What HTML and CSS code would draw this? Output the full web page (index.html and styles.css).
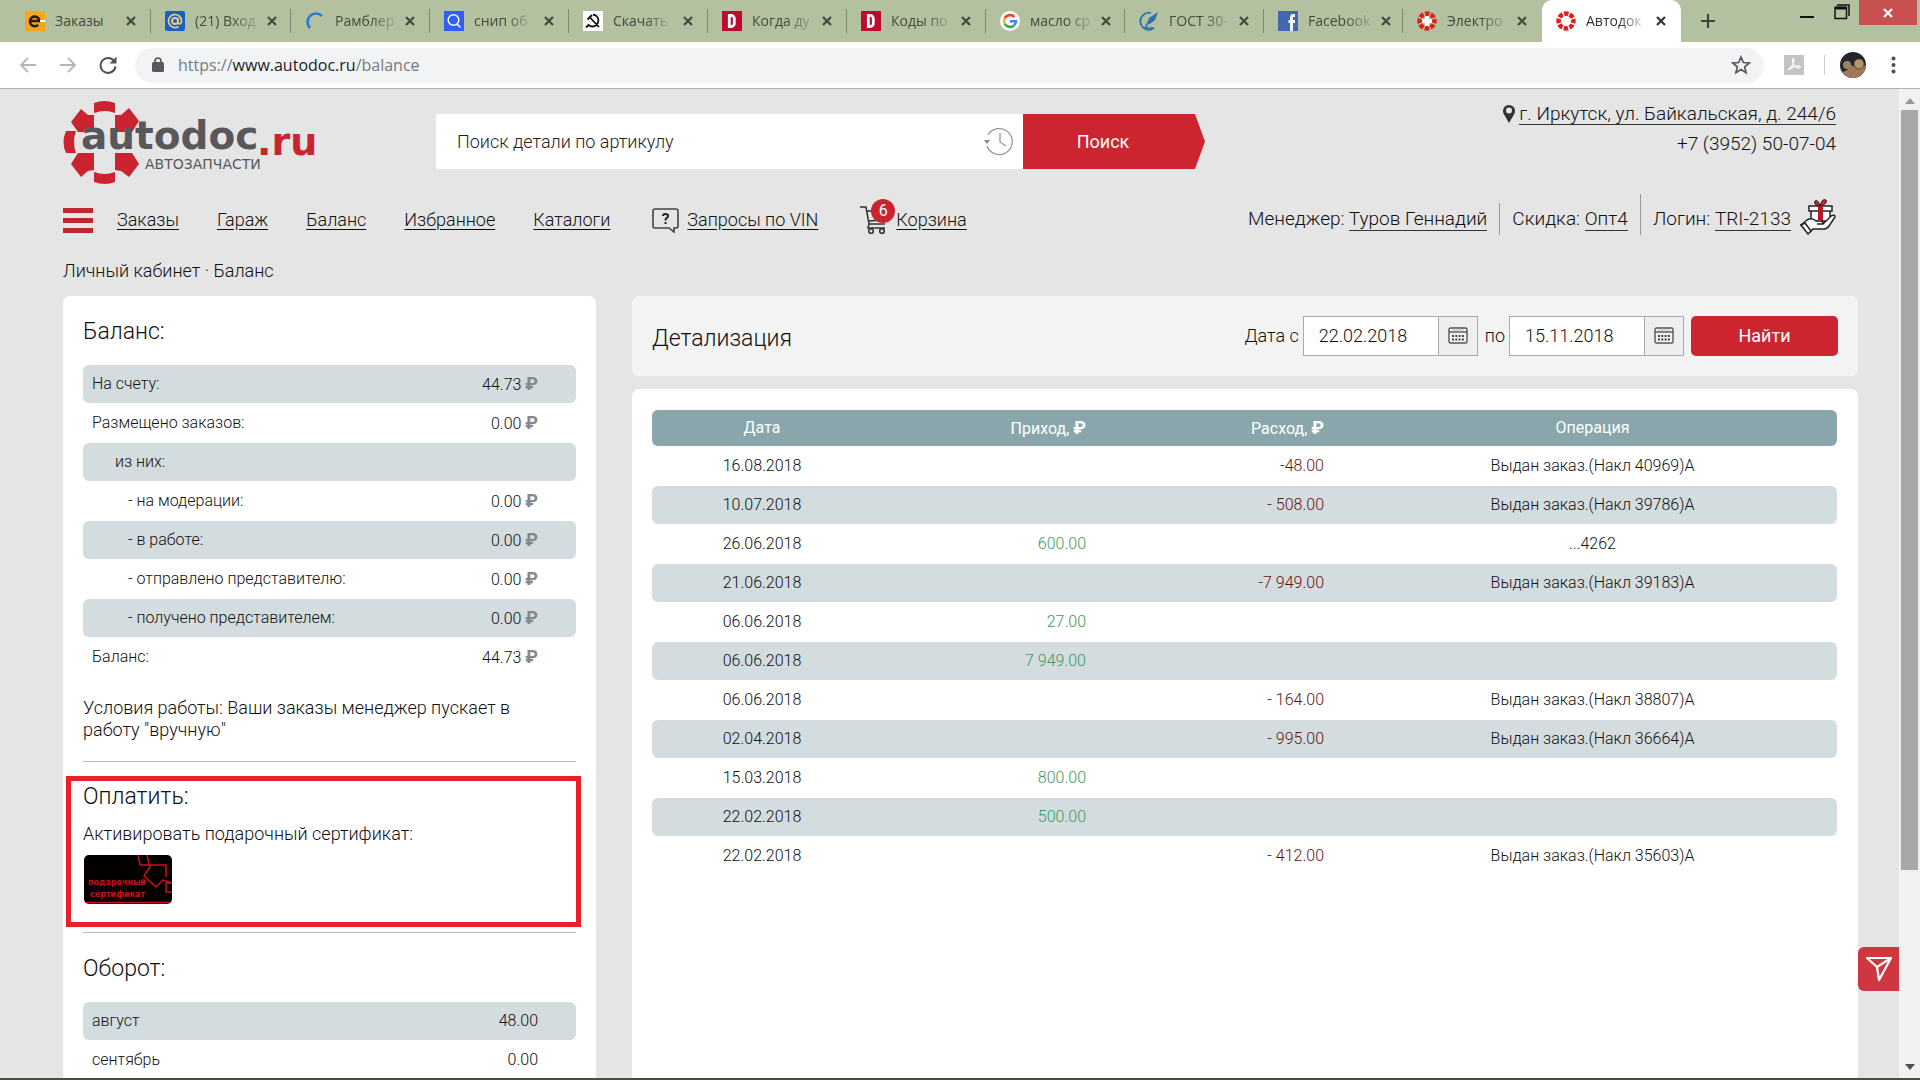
FILE: index.html
```html
<!DOCTYPE html>
<html lang="ru">
<head>
<meta charset="utf-8">
<title>Автодок</title>
<link rel="stylesheet" href="styles.css">
</head>
<body>
<svg class="defs" aria-hidden="true">
  <symbol id="x" viewBox="0 0 12 12"><path d="M2 2l8 8M10 2l-8 8" stroke="currentColor" stroke-width="2.2" fill="none"/></symbol>
  <symbol id="gear" viewBox="0 0 20 20"><circle cx="10" cy="10" r="7.4" fill="none" stroke="#e0211b" stroke-width="4.6" stroke-dasharray="4.4 1.41" stroke-dashoffset="2.2"/><path d="M10 5v10M5 10h10" stroke="#fff" stroke-width="4"/></symbol>
  <symbol id="dnews" viewBox="0 0 20 20"><rect width="20" height="20" fill="#bf0a30"/><path d="M7.300 4.500v11h2a3 3 0 0 0 3-3v-5a3 3 0 0 0-3-3z" fill="none" stroke="#fff" stroke-width="2.800"/></symbol>
  <symbol id="cal" viewBox="0 0 20 18"><rect x="1" y="1" width="18" height="15" rx="1.500" fill="#f4f5f6" stroke="#555" stroke-width="1.400"/><path d="M1 5h18" stroke="#555" stroke-width="1.400"/><path d="M4 3h12" stroke="#bbb"/><path d="M4 9h12M4 12.500h12" stroke="#444" stroke-width="2" stroke-dasharray="2 1.300"/></symbol>
</svg>

<header class="tabs">
  <div class="tab"><svg class="fav" viewBox="0 0 20 20"><rect width="20" height="20" fill="#f9a51a"/><path d="M5 10h9.500a4.800 4.800 0 1 0-1.400 3.800" fill="none" stroke="#2b1c08" stroke-width="2.600"/><path d="M15 10h5" stroke="#fff" stroke-width="2"/></svg><span>Заказы</span><button aria-label="Закрыть"><svg><use href="#x"/></svg></button></div>
  <div class="tab"><svg class="fav" viewBox="0 0 20 20"><rect width="20" height="20" rx="2" fill="#1760c9"/><circle cx="10" cy="10" r="3" fill="none" stroke="#f5c978" stroke-width="1.800"/><path d="M13 7v4.500c0 2 3.500 2 3.500-1.500a6.500 6.500 0 1 0-3 5.500" fill="none" stroke="#f5c978" stroke-width="1.700"/></svg><span>(21) Вход</span><button aria-label="Закрыть"><svg><use href="#x"/></svg></button></div>
  <div class="tab"><svg class="fav" viewBox="0 0 20 20"><path d="M5 17A8 8 0 0 1 17 5" fill="none" stroke="#2d79d6" stroke-width="2.600"/></svg><span>Рамблер</span><button aria-label="Закрыть"><svg><use href="#x"/></svg></button></div>
  <div class="tab"><svg class="fav" viewBox="0 0 20 20"><rect width="20" height="20" fill="#315efb"/><circle cx="9.500" cy="9" r="5.300" fill="none" stroke="#fff" stroke-width="1.500"/><path d="M13 13l3.500 3.500" stroke="#fff" stroke-width="1.500"/></svg><span>снип об</span><button aria-label="Закрыть"><svg><use href="#x"/></svg></button></div>
  <div class="tab"><svg class="fav" viewBox="0 0 20 20"><rect width="20" height="20" fill="#fff"/><path d="M10 3.500a6 6 0 1 1-4.500 10.500L3 16.500M4.500 8.500L9 4M7 6.500l9 9.500" fill="none" stroke="#111" stroke-width="1.800"/></svg><span>Скачать</span><button aria-label="Закрыть"><svg><use href="#x"/></svg></button></div>
  <div class="tab"><svg class="fav"><use href="#dnews"/></svg><span>Когда ду</span><button aria-label="Закрыть"><svg><use href="#x"/></svg></button></div>
  <div class="tab"><svg class="fav"><use href="#dnews"/></svg><span>Коды по</span><button aria-label="Закрыть"><svg><use href="#x"/></svg></button></div>
  <div class="tab"><svg class="fav" viewBox="0 0 20 20"><circle cx="10" cy="10" r="10" fill="#fff"/><g fill="none" stroke-width="2.600"><path d="M14.500 6A6 6 0 0 0 4.800 7.200" stroke="#ea4335"/><path d="M4.800 7.200a6 6 0 0 0 0 5.600" stroke="#fbbc05"/><path d="M4.800 12.800A6 6 0 0 0 14 14.400" stroke="#34a853"/><path d="M14 14.400a6 6 0 0 0 2-4.200h-6" stroke="#4285f4"/></g></svg><span>масло ср</span><button aria-label="Закрыть"><svg><use href="#x"/></svg></button></div>
  <div class="tab"><svg class="fav" viewBox="0 0 20 20"><path d="M12 2A8.500 8.500 0 1 0 15 17" fill="none" stroke="#2c6fb3" stroke-width="1.800"/><path d="M19 1l-3 8-5 4-3-1 2-5z" fill="#2c6fb3"/><path d="M9 12l-3 5h8" fill="none" stroke="#2c6fb3" stroke-width="1.500"/></svg><span>ГОСТ 30-</span><button aria-label="Закрыть"><svg><use href="#x"/></svg></button></div>
  <div class="tab"><svg class="fav" viewBox="0 0 20 20"><rect width="20" height="20" fill="#4267b2"/><path d="M17 4.500h-1.500q-2 0-2 2V20M10.500 10.500H17" fill="none" stroke="#fff" stroke-width="2.800"/></svg><span>Facebook</span><button aria-label="Закрыть"><svg><use href="#x"/></svg></button></div>
  <div class="tab"><svg class="fav"><use href="#gear"/></svg><span>Электро</span><button aria-label="Закрыть"><svg><use href="#x"/></svg></button></div>
  <div class="tab active"><svg class="fav"><use href="#gear"/></svg><span>Автодок</span><button aria-label="Закрыть"><svg><use href="#x"/></svg></button></div>
  <button class="newtab" aria-label="Новая вкладка"><svg viewBox="0 0 16 16"><path d="M8 1v14M1 8h14" stroke="#3c463a" stroke-width="2.200"/></svg></button>
  <div class="wincontrols">
    <button aria-label="Свернуть"><svg width="16" height="20"><path d="M1 17h14" stroke="#111" stroke-width="2"/></svg></button>
    <button aria-label="Восстановить"><svg width="16" height="20"><path d="M1 7.500h11.500V18.500H1zM3 5h12v11" fill="none" stroke="#111" stroke-width="1.500"/><path d="M1 8h11.500" stroke="#111" stroke-width="3"/></svg></button>
    <button class="winclose" aria-label="Закрыть окно"><svg width="12" height="12"><use href="#x"/></svg></button>
  </div>
</header>

<div class="toolbar">
  <button aria-label="Назад"><svg viewBox="0 0 18 18"><path d="M17 9H2M9 2L2 9l7 7" fill="none" stroke="#b4b6b8" stroke-width="1.800"/></svg></button>
  <button aria-label="Вперёд"><svg viewBox="0 0 18 18"><path d="M1 9h15M9 2l7 7-7 7" fill="none" stroke="#b4b6b8" stroke-width="1.800"/></svg></button>
  <button aria-label="Обновить"><svg viewBox="0 0 18 18"><path d="M15.500 5.500a7.500 7.500 0 1 0 1 5" fill="none" stroke="#4d5156" stroke-width="2"/><path d="M17.500 0.500v7h-7z" fill="#4d5156"/></svg></button>
  <div class="omnibox">
    <svg width="12" height="16" viewBox="0 0 12 16"><rect y="5" width="12" height="10" rx="1.500" fill="#55585d"/><path d="M3 6V4a3 3 0 0 1 6 0v2" fill="none" stroke="#55585d" stroke-width="1.600"/></svg>
    <div class="url">https://<b>www.autodoc.ru</b>/balance</div>
    <svg class="star" width="20" height="20" viewBox="0 0 20 20"><path d="M10 2l2.300 5.500 6 .500-4.600 3.900 1.400 5.800L10 14.600l-5.100 3.100 1.400-5.800L1.700 8l6-.500z" fill="none" stroke="#55585d" stroke-width="1.700"/></svg>
  </div>
  <svg width="20" height="20" viewBox="0 0 20 20"><rect width="20" height="20" fill="#c4c4c4"/><path d="M4 15c4-2 7-9 5.500-11S8 9 11 11.500s6 1.500 5 0-8 0-12 3.500z" fill="none" stroke="#fff" stroke-width="1.200"/></svg>
  <i class="sep"></i>
  <svg class="avatar" width="26" height="26" viewBox="0 0 26 26"><circle cx="13" cy="13" r="13" fill="#23252c"/><path d="M2 20q6-1 9-7 8 5 15 0a13 13 0 0 1-24 7z" fill="#a0785c"/><circle cx="7" cy="13" r="4" fill="#9a865e"/><circle cx="19" cy="12" r="5" fill="#b09868" stroke="#5d4a31"/></svg>
  <svg class="dots" width="5" height="18" viewBox="0 0 5 18"><g fill="#4d5156"><circle cx="2.500" cy="2.500" r="2"/><circle cx="2.500" cy="9" r="2"/><circle cx="2.500" cy="15.500" r="2"/></g></svg>
</div>

<div class="viewport">
<main class="page">
  <div class="top">
    <a class="logo" href="#" aria-label="autodoc.ru">
      <svg width="260" height="84" viewBox="0 0 260 84">
        <g fill="#cb2431">
          <path d="M31 2q11-4 21 0v10q-10-4-21 0z"/><path d="M31 81q11 4 21 0V71q-10 4-21 0z"/>
          <path d="M3 30h10q-4 11 0 22H3q-5-11 0-22z"/>
          <path d="M31 14v17H15q-1-2-2-3l-5-7 10-13 7 6z"/><path d="M52 14v17h17q1-2 2-3l5-8L66 7l-8 7z"/>
          <path d="M31 69V52H15l-2 3-5 8 10 13 7-6z"/><path d="M52 69V52h17l2 3 5 8-10 13-8-6z"/>
        </g>
        <text class="logo-main" x="18" y="48">autodoc</text><text class="logo-ru" x="194" y="54">.ru</text>
        <text class="logo-sub" x="82" y="68">АВТОЗАПЧАСТИ</text>
      </svg>
    </a>
    <form class="search">
      <div class="field"><input type="text" aria-label="Поиск" placeholder="Поиск детали по артикулу">
        <svg width="30" height="30" viewBox="0 0 30 30"><path d="M4 8a13 13 0 1 1-1 11M16 6v9l6 4" fill="none" stroke="#999" stroke-width="1.300"/><path d="M0 13h6l-3 4z" fill="#888"/></svg></div>
      <button type="button">Поиск</button>
    </form>
    <address>
      <div><svg width="14" height="20" viewBox="0 0 14 20"><path d="M7 19L1.500 9.500a6 6 0 1 1 11 0z" fill="#333"/><circle cx="7" cy="6.500" r="3" fill="#e5e5e5"/></svg><a href="#">г. Иркутск, ул. Байкальская, д. 244/6</a></div>
      <div>+7 (3952) 50-07-04</div>
    </address>
  </div>

  <div class="navrow">
    <nav>
      <button class="burger" aria-label="Меню"><i></i><i></i><i></i></button>
      <a href="#">Заказы</a><a href="#">Гараж</a><a href="#">Баланс</a><a href="#">Избранное</a><a href="#">Каталоги</a>
      <span class="iconlink"><svg width="27" height="26" viewBox="0 0 27 26"><path d="M3 2h21q2 0 2 2v15q0 2-2 2h-2v4l-5-4H3q-2 0-2-2V4q0-2 2-2z" fill="none" stroke="#444" stroke-width="1.600"/><path d="M11 9q0-2 2.500-2T16 9q0 1.500-1.300 2T13.500 13.500M13.500 15v2" fill="none" stroke="#222" stroke-width="2"/></svg><a href="#">Запросы по VIN</a></span>
      <span class="iconlink cart"><svg width="26" height="30" viewBox="0 0 26 30"><path d="M0 2h6l3 17h16M7 6h18l-2 9-15 1M9 19l-1 4h17" fill="none" stroke="#333" stroke-width="1.500"/><circle cx="11" cy="26" r="2.300" fill="none" stroke="#333" stroke-width="1.600"/><circle cx="22" cy="26" r="2.300" fill="none" stroke="#333" stroke-width="1.600"/></svg><b class="badge">6</b><a href="#">Корзина</a></span>
    </nav>
    <div class="user">
      <span>Менеджер: <a href="#">Туров Геннадий</a></span>
      <span>Скидка: <a href="#">Опт4</a></span>
      <span class="tall">Логин: <a href="#">TRI-2133</a></span>
      <svg width="36" height="36" viewBox="0 0 36 36"><g stroke="#222" stroke-width="1.500" fill="#fff"><path d="M11 12h19v10H11zM9 7h23v5H9z"/><path d="M1 26l6-5q5-3 9 1h5q3 1 1 3h-5 6l8-8q4-2 4 1l-6 9q-2 3-6 3H13l-3 3z"/><path d="M1 26l4-2 6 8-3 3z"/></g><path d="M18 7h5v15h-5z" fill="#b01c28"/><path d="M20 7q-7-1-5-5 3-2 5 5 2-8 6-6 2 4-6 6z" fill="#d02030" stroke="#222"/></svg>
    </div>
  </div>

  <div class="crumbs">Личный кабинет · Баланс</div>

  <div class="columns">
    <aside class="card side">
      <section>
        <h2>Баланс:</h2>
        <table class="rows money">
          <tr><td>На счету:</td><td>44.73 <b>₽</b></td></tr>
          <tr><td>Размещено заказов:</td><td>0.00 <b>₽</b></td></tr>
          <tr><td class="in1">из них:</td><td></td></tr>
          <tr><td class="in2">- на модерации:</td><td>0.00 <b>₽</b></td></tr>
          <tr><td class="in2">- в работе:</td><td>0.00 <b>₽</b></td></tr>
          <tr><td class="in2">- отправлено представителю:</td><td>0.00 <b>₽</b></td></tr>
          <tr><td class="in2">- получено представителем:</td><td>0.00 <b>₽</b></td></tr>
          <tr><td>Баланс:</td><td>44.73 <b>₽</b></td></tr>
        </table>
        <p class="terms">Условия работы: Ваши заказы менеджер пускает в работу "вручную"</p>
      </section>
      <section class="pay">
        <h2>Оплатить:</h2>
        <p>Активировать подарочный сертификат:</p>
        <a href="#" class="cert"><svg width="88" height="49" viewBox="0 0 88 49"><rect width="88" height="49" rx="5" fill="#050000"/><path d="M54 0l2 10h26v12M63 0l3 12-6 9 12 11 7-7 9 3M88 28h-6v9h6M2 47.500h84" fill="none" stroke="#c8101c" stroke-width="1.500"/><text x="4" y="30">подарочный</text><text x="6" y="42">сертификат</text></svg></a>
        <div class="marker"></div>
      </section>
      <section class="turnover">
        <h2>Оборот:</h2>
        <table class="rows money">
          <tr><td>август</td><td>48.00</td></tr>
          <tr><td>сентябрь</td><td>0.00</td></tr>
        </table>
      </section>
    </aside>

    <div class="detail">
      <form class="card filter">
        <h2>Детализация</h2>
        <label for="from">Дата с</label>
        <div class="date"><input id="from" type="text" value="22.02.2018"><button type="button" aria-label="Календарь"><svg width="22" height="18"><use href="#cal"/></svg></button></div>
        <label for="to" class="mid">по</label>
        <div class="date"><input id="to" type="text" value="15.11.2018"><button type="button" aria-label="Календарь"><svg width="22" height="18"><use href="#cal"/></svg></button></div>
        <button type="button" class="find">Найти</button>
      </form>
      <div class="card list">
        <table class="rows ops">
          <thead><tr><th>Дата</th><th>Приход, <b>₽</b></th><th>Расход, <b>₽</b></th><th>Операция</th></tr></thead>
          <tbody>
          <tr><td>16.08.2018</td><td></td><td>-48.00</td><td>Выдан заказ.(Накл 40969)А</td></tr>
          <tr><td>10.07.2018</td><td></td><td>- 508.00</td><td>Выдан заказ.(Накл 39786)А</td></tr>
          <tr><td>26.06.2018</td><td>600.00</td><td></td><td>...4262</td></tr>
          <tr><td>21.06.2018</td><td></td><td>-7 949.00</td><td>Выдан заказ.(Накл 39183)А</td></tr>
          <tr><td>06.06.2018</td><td>27.00</td><td></td><td></td></tr>
          <tr><td>06.06.2018</td><td>7 949.00</td><td></td><td></td></tr>
          <tr><td>06.06.2018</td><td></td><td>- 164.00</td><td>Выдан заказ.(Накл 38807)А</td></tr>
          <tr><td>02.04.2018</td><td></td><td>- 995.00</td><td>Выдан заказ.(Накл 36664)А</td></tr>
          <tr><td>15.03.2018</td><td>800.00</td><td></td><td></td></tr>
          <tr><td>22.02.2018</td><td>500.00</td><td></td><td></td></tr>
          <tr><td>22.02.2018</td><td></td><td>- 412.00</td><td>Выдан заказ.(Накл 35603)А</td></tr>
          </tbody>
        </table>
      </div>
    </div>
  </div>
</main>
<button class="feedback" aria-label="Написать"><svg width="28" height="26" viewBox="0 0 28 26"><path d="M2 2h24L14 24l-2-13zM2 2l10 9L26 2" fill="none" stroke="#fff" stroke-width="2.200" stroke-linejoin="round"/></svg></button>
<div class="scrollbar"><svg width="10" height="6"><path d="M0 6l5-6 5 6z" fill="#999"/></svg><i></i><svg width="10" height="6"><path d="M0 0l5 6 5-6z" fill="#505050"/></svg></div>
</div>
<footer class="taskbar"></footer>
</body>
</html>
```
FILE: styles.css
```css
* { box-sizing: border-box; }
body { margin: 0; height: 100vh; display: flex; flex-direction: column; overflow: hidden; font: 300 18px/22px Roboto, sans-serif; color: #111; background: #e5e5e5; }
button { border: 0; background: none; padding: 0; margin: 0; font: inherit; color: inherit; }
input { font: inherit; color: inherit; border: 0; min-width: 0; }
svg { display: block; flex: none; }
i { display: block; }
a { color: inherit; }
h2 { margin: 0; font-size: 23px; line-height: 28px; font-weight: 300; }
p { margin: 0; }
.defs { position: absolute; width: 0; height: 0; }

.tabs { flex: none; height: 42px; padding-left: 11px; background: #b3c1a0; display: flex; font: 400 14px/20px "Open Sans", sans-serif; color: #434b40; }
.tab { width: 139px; display: flex; align-items: center; gap: 10px; padding: 0 14px; background: linear-gradient(#7f8a72, #7f8a72) right center / 1px 24px no-repeat; }
.tab:nth-child(-n+2) { width: 140px; }
.tab:nth-child(11) { background: none; }
.tab.active { background: #fff; border-radius: 10px 10px 0 0; color: #333; }
.fav { width: 20px; height: 20px; }
.tab span { white-space: nowrap; -webkit-mask-image: linear-gradient(90deg, #000 60%, rgba(0, 0, 0, .2)); mask-image: linear-gradient(90deg, #000 60%, rgba(0, 0, 0, .2)); }
.tab:first-child span { -webkit-mask-image: none; mask-image: none; }
.tab button { margin-left: auto; }
.tab button svg { width: 12px; height: 12px; }
.newtab { width: 54px; display: grid; place-items: center; }
.newtab svg { width: 16px; height: 16px; }
.wincontrols { margin-left: auto; display: flex; align-items: flex-start; gap: 19px; padding-right: 3px; }
.wincontrols .winclose { width: 58px; height: 25px; margin-left: -10px; background: #c75050; color: #fff; display: grid; place-items: center; }

.toolbar { flex: none; height: 47px; background: #fff; border-bottom: 1px solid #b0b0b0; display: flex; align-items: center; padding: 0 24px 0 19px; }
.toolbar button { margin-right: 22px; }
.toolbar button svg { width: 18px; height: 18px; }
.omnibox { flex: 1; height: 35px; border-radius: 18px; background: #f1f3f4; display: flex; align-items: center; padding: 0 13px 0 17px; margin: 0 20px 0 -4px; }
.url { flex: 1; margin-left: 14px; font: 400 16px/24px "Open Sans", sans-serif; color: #777b80; }
.url b { font-weight: 400; color: #202124; }
.sep { width: 1px; height: 20px; background: #ccc; margin: 0 15px 0 20px; }
.avatar { margin-right: 25px; }

.viewport { flex: 1; min-height: 0; display: flex; position: relative; overflow: hidden; }
.page { flex: 1; min-width: 0; padding: 12px 41px 0 63px; display: flex; flex-direction: column; }
.scrollbar { width: 21px; background: #f1f1f1; display: flex; flex-direction: column; align-items: center; padding: 9px 0 8px; }
.scrollbar i { width: 17px; height: 760px; margin: 6px 0 auto; background: #a8a8a8; }
.taskbar { flex: none; height: 2px; background: #46503f; }
.feedback { position: absolute; right: 21px; bottom: 87px; width: 41px; height: 44px; border-radius: 6px 0 0 6px; background: #ce3640; display: grid; place-items: center; }

.top { display: flex; height: 84px; padding-right: 22px; }
.logo { width: 373px; }
.logo svg { overflow: visible; }
.logo-main { font: bold 39px "DejaVu Sans", sans-serif; fill: #58585a; }
.logo-ru { font: bold 38px "DejaVu Sans", sans-serif; fill: #cb2431; }
.logo-sub { font: 14px "DejaVu Sans", sans-serif; fill: #58585a; }
.search { display: flex; height: 55px; margin-top: 13px; width: 769px; }
.field { flex: 1; display: flex; align-items: center; background: #fff; padding: 0 9px 0 21px; }
.field input { flex: 1; background: none; padding: 0; outline: 0; }
.field input::placeholder { color: #222; opacity: 1; }
.search button { width: 182px; padding-right: 22px; color: #fff; background: #cd2530; clip-path: polygon(0 0, 172px 0, 100% 50%, 172px 100%, 0 100%); font-weight: 400; }
address { margin: -2px 0 0 auto; font-style: normal; text-align: right; font-size: 19px; line-height: 30px; }
address div { display: flex; justify-content: flex-end; align-items: center; gap: 3px; min-height: 30px; }
address a, .user a { text-decoration: none; border-bottom: 1px solid #333; line-height: 20px; }

.navrow { display: flex; justify-content: space-between; align-items: flex-end; height: 43px; margin-top: 9px; padding-right: 22px; white-space: nowrap; }
nav { display: flex; align-items: center; gap: 38px; }
.burger { width: 30px; display: grid; gap: 5px; margin-right: -14px; }
.burger i { height: 5px; background: #c0272d; }
nav a { text-underline-offset: 3px; }
.iconlink { display: flex; align-items: center; gap: 8px; position: relative; margin-left: 4px; }
.cart { gap: 10px; }
.badge { position: absolute; left: 11px; top: -6px; width: 24px; height: 24px; border-radius: 50%; background: #cb2431; color: #fff; font-size: 16px; line-height: 24px; font-weight: 400; text-align: center; }
.user { display: flex; align-items: flex-end; font-size: 19px; }
.user span { line-height: 32px; padding: 0 12px; border-left: 1px solid #999; }
.user span:first-child { border: 0; }
.user .tall { padding-top: 9px; padding-right: 9px; }

.crumbs { margin-top: 24px; line-height: 24px; }
.columns { display: grid; grid-template-columns: 533px 1fr; gap: 36px; margin-top: 13px; }
.card { border-radius: 7px; background: #fff; }
.side { padding: 22px 20px 20px 20px; }
.rows { width: 100%; border-collapse: separate; border-spacing: 0 1px; font-size: 16px; line-height: 20px; }
.rows td { height: 38px; padding: 0; }
.rows td:first-child, .rows th:first-child { border-radius: 6px 0 0 6px; }
.rows td:last-child, .rows th:last-child { border-radius: 0 6px 6px 0; }
.money { margin-top: 18px; }
.money tr:nth-child(odd) td, .ops tbody tr:nth-child(even) td { background: #d3dcdf; }
.money td:first-child { padding-left: 9px; }
.money td:last-child { text-align: right; padding-right: 38px; }
.rows b { font-size: 18px; font-weight: 700; }
.money b { color: #888; }
.money td.in1 { padding-left: 32px; }
.money td.in2 { padding-left: 45px; }
.terms { margin-top: 20px; padding: 0 40px 20px 0; }
.pay { position: relative; border-top: 1px solid #bbb; padding: 21px 0 27px; height: 171px; }
.pay p { margin: 12px 0 10px; }
.cert { display: block; margin-left: 1px; width: 88px; }
.cert text { font: bold 8px "DejaVu Sans", sans-serif; fill: #c8101c; }
.marker { position: absolute; left: -17px; right: -5px; top: 14px; bottom: 5px; border: 5px solid #e92029; }
.turnover { border-top: 1px solid #bbb; padding-top: 22px; }

.detail { display: flex; flex-direction: column; gap: 13px; min-width: 0; }
.filter { background: #f3f3f3; height: 80px; padding: 0 20px; display: flex; align-items: center; }
.filter h2 { margin-right: auto; padding-top: 5px; }
.filter label { margin-right: 4px; }
.filter .mid { margin-left: 7px; }
.date { display: flex; width: 175px; height: 40px; border: 1px solid #aaa; background: #fff; }
.date input { flex: 1; padding: 0 0 0 15px; }
.date button { width: 39px; background: #eceef0; border-left: 1px solid #aaa; display: grid; place-items: center; }
.find { margin-left: 7px; width: 147px; height: 40px; border-radius: 5px; background: #cd2530; color: #fff; font-weight: 400; }
.list { flex: 1; padding: 20px 21px 20px 20px; }
.ops { table-layout: fixed; }
.ops th { height: 36px; padding: 0; background: #88a6ac; color: #fff; font-weight: 400; }
.ops th:nth-child(1) { width: 220px; }
.ops th:nth-child(2), .ops th:nth-child(3) { width: 238px; }
.ops td { text-align: center; }
.ops th:nth-child(2), .ops th:nth-child(3), .ops td:nth-child(2), .ops td:nth-child(3) { text-align: right; padding-right: 24px; }
.ops td:nth-child(2) { color: #3f9a62; }
.ops td:nth-child(3) { color: #6b1010; }
```
